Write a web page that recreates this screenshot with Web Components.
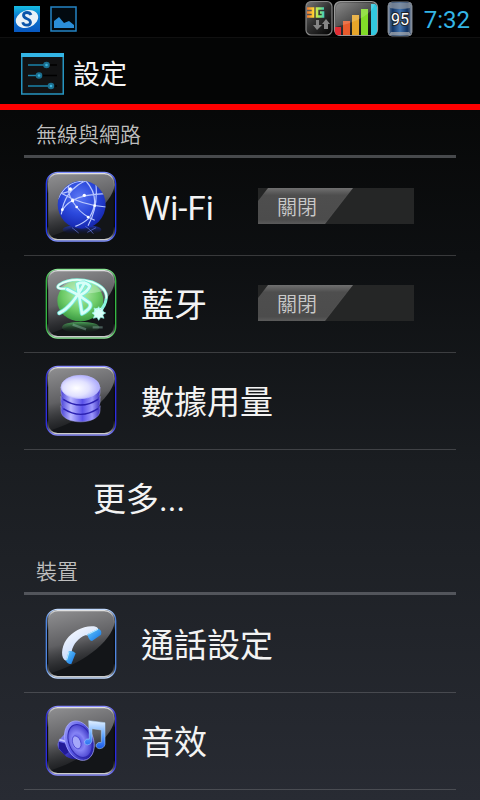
<!DOCTYPE html>
<html lang="zh-Hant">
<head>
<meta charset="utf-8">
<meta name="viewport" content="width=device-width, initial-scale=1">
<title>設定</title>
<style>
html{background:#282b33}
body{margin:0;min-height:100vh;color:#f3f3f3;font-family:Roboto,"Noto Sans CJK TC",sans-serif;background:linear-gradient(#000,#070808 14%,#0d0f11 32%,#1a1d21 58%,#282b33)}
</style>
</head>
<body>
<settings-screen></settings-screen>
<script>
const define = (name, html, init) => {
  const t = document.createElement('template');
  t.innerHTML = html;
  customElements.define(name, class extends HTMLElement {
    constructor() {
      super();
      this.attachShadow({mode: 'open'}).append(t.content.cloneNode(true));
    }
    connectedCallback() { if (init) init(this, this.shadowRoot); }
  });
};

const art = {
  wifi: ['#2238ee', '#7f90ff', `
    <defs><radialGradient id="g" cx=".45" cy=".35" r=".7"><stop offset="0" stop-color="#5b78f4"/><stop offset=".5" stop-color="#2b48dc"/><stop offset="1" stop-color="#1222a8"/></radialGradient>
    <clipPath id="c"><circle cx="137" cy="119" r="72"/></clipPath>
    <linearGradient id="f" x2="0" y2="1"><stop offset="0" stop-color="#2038c8"/><stop offset="1" stop-color="#0a1040" stop-opacity="0"/></linearGradient></defs>
    <ellipse cx="138" cy="194" rx="58" ry="15" fill="url(#f)"/>
    <circle cx="137" cy="119" r="72" fill="url(#g)"/>
    <g clip-path="url(#c)" fill="none" stroke="#b9c8ff" stroke-width="3.5">
      <path d="M66 102Q90 50 142 48M66 86Q100 86 126 60Q136 52 150 48M76 148Q84 80 142 50M98 62Q92 90 122 126Q140 150 176 166M110 106Q142 88 208 86M70 82Q140 122 212 126M150 48Q196 100 160 158Q142 176 118 184M180 60Q186 130 156 182M110 106Q84 122 78 140"/>
    </g>
    <path d="M148 184Q162 192 172 206M108 188L128 204M154 202L180 188" stroke="#6f86f0" stroke-width="3" opacity=".6" fill="none"/>
    <g fill="#fff"><circle cx="110" cy="107" r="5"/><circle cx="145" cy="91" r="5"/><circle cx="122" cy="126" r="4"/><circle cx="156" cy="156" r="4"/><circle cx="103" cy="72" r="5"/><circle cx="79" cy="134" r="4"/><circle cx="176" cy="122" r="4"/></g>`],
  bluetooth: ['#35b843', '#8fe898', `
    <defs><radialGradient id="g" cx=".5" cy=".35" r=".65"><stop offset="0" stop-color="#b4eeae"/><stop offset=".6" stop-color="#6cca66"/><stop offset="1" stop-color="#3a9a42"/></radialGradient>
    <linearGradient id="f" x2="0" y2="1"><stop offset="0" stop-color="#4da65a"/><stop offset="1" stop-color="#173020" stop-opacity="0"/></linearGradient></defs>
    <ellipse cx="134" cy="196" rx="56" ry="17" fill="url(#f)"/>
    <path d="M110 188L150 202M170 196h30" stroke="#b9f2e0" stroke-width="7" opacity=".3"/>
    <ellipse cx="133" cy="116" rx="69" ry="62" fill="url(#g)"/>
    <path d="M74 76Q100 46 160 56Q190 66 200 88Q140 104 74 80Z" fill="#e8fff0" opacity=".35"/>
    <g fill="none" stroke-linecap="round" stroke-linejoin="round">
      <path d="M92 80Q54 82 70 68Q108 44 168 60Q214 78 211 108Q208 132 192 146" stroke="#8af5df" stroke-width="9"/>
      <path d="M92 80Q54 82 70 68Q108 44 168 60Q214 78 211 108" stroke="#eafff9" stroke-width="5"/>
      <path d="M70 153Q108 136 146 62M94 82Q130 98 160 122Q172 136 138 155L124 66Q146 56 161 72Q156 88 132 100" stroke="#75ebdf" stroke-width="13"/>
      <path d="M70 153Q108 136 146 62M94 82Q130 98 160 122Q172 136 138 155L124 66Q146 56 161 72Q156 88 132 100" stroke="#d8fff8" stroke-width="8"/>
    </g>
    <circle cx="188" cy="152" r="15" fill="#d9fff9"/>
    <path d="M188 134l4 9 10-5-3 10 10 5-9 5 4 11-10-3-6 9-5-9-11 3 4-10-8-6 9-4-3-11 10 4z" fill="#d9fff9" stroke="#8cf4e2" stroke-width="2"/>`],
  data: ['#2e2ce0', '#8a8cff', `
    <defs><linearGradient id="g"><stop offset="0" stop-color="#4a43d8"/><stop offset=".25" stop-color="#b9b7ff"/><stop offset=".55" stop-color="#5a52ea"/><stop offset=".8" stop-color="#9c98fc"/><stop offset="1" stop-color="#3b30c0"/></linearGradient>
    <radialGradient id="t" cx=".4" cy=".55" r=".65"><stop offset="0" stop-color="#fff"/><stop offset=".5" stop-color="#e2e2ff"/><stop offset="1" stop-color="#a3a1fc"/></radialGradient></defs>
    <g fill="url(#g)" stroke="#a9a7ff" stroke-width="1.5">
      <path d="M75 140v14c0 46 117 46 117 0v-14c0 38-117 38-117 0z"/>
      <path d="M75 112v16c0 46 117 46 117 0v-16c0 38-117 38-117 0z"/>
      <path d="M75 84v16c0 46 117 46 117 0V84c0 38-117 38-117 0z"/>
      <path d="M77 108c10 32 102 32 113 0v12c-10 32-102 32-113 0zM77 136c10 32 102 32 113 0v12c-10 32-102 32-113 0z" stroke="none"/>
    </g>
    <path d="M82 121q52 34 104 0M82 149q52 34 104 0" fill="none" stroke="#2a20b0" stroke-width="4"/>
    <ellipse cx="133" cy="84" rx="58" ry="35" fill="url(#t)" stroke="#bbbaff" stroke-width="2"/>`],
  phone: ['#4f86e0', '#c4dcff', `
    <defs><linearGradient id="g" x2=".6" y2="1"><stop offset="0" stop-color="#fff"/><stop offset="1" stop-color="#bcd2fa"/></linearGradient>
    <linearGradient id="b" y2="1"><stop offset="0" stop-color="#69ccff"/><stop offset="1" stop-color="#0d6fe2"/></linearGradient></defs>
    <path d="M91 177C72 170 76 134 91 113C110 87 143 70 174 73Q185 75 187 82L160 103Q154 99 148 100C128 107 112 126 107 148L104 156Z" fill="url(#g)"/>
    <path d="M154 97L187 80Q199 84 195 98L168 117Q158 116 154 97Z" fill="url(#b)"/>
    <path d="M98 148Q110 145 119 154L106 186Q94 186 90 176Z" fill="url(#b)"/>
    <path d="M157 97L186 82M99 150L92 174" stroke="#b8ecff" stroke-width="3"/>`],
  sound: ['#2a29df', '#8a8cff', `
    <defs><linearGradient id="g" x2=".7" y2="1"><stop offset="0" stop-color="#aeb0ff"/><stop offset=".5" stop-color="#5a59e6"/><stop offset="1" stop-color="#211c9c"/></linearGradient>
    <radialGradient id="r" cx=".42" cy=".5" r=".6"><stop offset="0" stop-color="#4f4ce0"/><stop offset=".45" stop-color="#8583f5"/><stop offset="1" stop-color="#3a33c4"/></radialGradient>
    <linearGradient id="n" y2="1" x2="0"><stop offset="0" stop-color="#e4f1ff"/><stop offset=".55" stop-color="#5ba2ff"/><stop offset="1" stop-color="#1857e8"/></linearGradient></defs>
    <path d="M98 92L72 120Q60 134 68 150L90 172Q106 184 132 180Z" fill="url(#g)"/>
    <path d="M68 128L90 134L98 160L86 168L68 148Z" fill="#221a96"/><path d="M70 122L92 128" stroke="#c0c2ff" stroke-width="5"/>
    <ellipse cx="130" cy="125" rx="42" ry="61" transform="rotate(-20 130 125)" fill="url(#g)" stroke="#a9abff" stroke-width="2"/>
    <ellipse cx="132" cy="126" rx="34" ry="51" transform="rotate(-20 132 126)" fill="url(#r)" stroke="#2f28b0" stroke-width="3"/>
    <ellipse cx="122" cy="130" rx="12" ry="20" transform="rotate(-20 122 130)" fill="#a5a7fa" stroke="#3d36c8" stroke-width="2"/>
    <path d="M158 65L207 71V136Q204 149 190 149Q178 147 181 136Q186 128 196 130V93L168 89V126Q165 138 153 138Q143 135 146 126Q151 118 160 120Z" fill="url(#n)" stroke="#b5daff" stroke-width="1.5"/>`]
};

define('gloss-icon', `
<style>:host{display:block;flex:none;width:72px;height:72px}svg{display:block;width:100%;height:100%}</style>
<div></div>`, (el, root) => {
  const [edge, bright, body] = art[el.getAttribute('name')];
  root.querySelector('div').innerHTML = `
  <svg viewBox="27 18 216 216" aria-hidden="true">
    <defs>
      <linearGradient id="shine" x1=".2" x2=".45" y2="1"><stop offset="0" stop-color="#8c8c8e"/><stop offset=".5" stop-color="#606063"/><stop offset="1" stop-color="#1c1e21" stop-opacity=".4"/></linearGradient>
      <linearGradient id="rim" x2="0" y2="1"><stop offset="0" stop-color="${bright}"/><stop offset=".12" stop-color="${edge}"/><stop offset=".88" stop-color="${edge}"/><stop offset="1" stop-color="${bright}"/></linearGradient>
      <linearGradient id="top" x2="0" y2="1"><stop offset="0" stop-color="#fff" stop-opacity=".85"/><stop offset=".12" stop-color="#ddd" stop-opacity=".3"/><stop offset=".3" stop-color="#000" stop-opacity=".5"/><stop offset=".8" stop-color="#000" stop-opacity=".5"/><stop offset=".92" stop-color="#ddd" stop-opacity=".3"/><stop offset="1" stop-color="#fff" stop-opacity=".8"/></linearGradient>
    </defs>
    <rect x="31" y="22" width="208" height="206" rx="34" fill="#131518"/>
    <path d="M36 56Q38 28 66 26H206Q234 28 236 60C228 122 130 190 36 216Z" fill="url(#shine)"/>
    <rect x="31" y="22" width="208" height="206" rx="34" fill="none" stroke="url(#rim)" stroke-width="4"/>
    <rect x="35" y="26" width="200" height="198" rx="30" fill="none" stroke="url(#top)" stroke-width="4"/>
    ${body}
  </svg>`;
});

define('status-bar', `
<style>
:host{display:flex;align-items:center;height:38px;box-sizing:border-box;padding:0 10px 0 14px;background:#000;border-bottom:1px solid #101010}
svg{display:block;flex:none}
.s{margin-right:10px}
.end{display:flex;align-items:center;margin-left:auto}
.bat{margin:0 10px 0 6px}
time{padding-top:2px;font-size:24px;line-height:36px;color:#33b5e5}
</style>
<svg class="s" width="26" height="26" viewBox="0 0 26 26" role="img" aria-label="S"><defs><linearGradient id="a" x2="0" y2="1"><stop stop-color="#16bde2"/><stop offset=".4" stop-color="#0a78d0"/><stop offset="1" stop-color="#0757c0"/></linearGradient></defs><path fill="url(#a)" d="M0 0h26v26H0z"/><ellipse cx="13" cy="13" rx="11.5" ry="8.5" fill="#e9f2f8" transform="rotate(-20 13 13)"/><path d="M17 9q-1-2.500-4-2.500t-3.500 2.500q0 2.500 3.500 3.700t3.500 4q-.5 2.500-3.800 2.500t-4-3" fill="none" stroke="#0a55aa" stroke-width="2.800"/></svg>
<svg width="28" height="26" viewBox="0 0 28 26" role="img" aria-label="圖片"><path d="M1 1h25v24H1z" fill="#020a10" stroke="#2584c4" stroke-width="1.5"/><path d="M4 22v-7l5-4 5 6 5-2 5 4v3z" fill="#2b8ed8"/></svg>
<div class="end">
<svg width="80" height="38" viewBox="300 0 80 38" role="img" aria-label="3G">
 <defs><linearGradient id="k" x2=".8" y2="1"><stop stop-color="#777"/><stop offset=".5" stop-color="#333"/><stop offset="1" stop-color="#090909"/></linearGradient>
 <linearGradient id="q" gradientUnits="userSpaceOnUse" x1="306" x2="326"><stop stop-color="#e63"/><stop offset=".4" stop-color="#fd3"/><stop offset=".65" stop-color="#9e6"/><stop offset="1" stop-color="#2bd"/></linearGradient></defs>
 <rect x="306" y="1.5" width="26" height="33.5" rx="5" fill="url(#k)" stroke="#888" stroke-width="1.2"/>
 <path d="M307 8.500h6v8h-6M307 12.500h6M324 8.500h-7v8h6v-4h-3" fill="none" stroke="url(#q)" stroke-width="2.6"/>
 <path d="M316 20h3v5h3l-5 5-4-5h3zM324 29v-5h-2l4-5 4 5h-2v5z" fill="#858585"/>
 <rect x="334.5" y="1.5" width="43" height="34" rx="6" fill="url(#k)" stroke="#999" stroke-width="1.2"/>
 <path d="M335 27h6v8h-5q-2-4-1-8z" fill="#e22c33"/><path d="M343 21h7v14h-7z" fill="#e85b2c"/><path d="M352 15h7v20h-7z" fill="#e6a62a"/><path d="M361 9h7v26h-7z" fill="#82dc28"/><path d="M371 4h4q2 1 2 3v25l-2 3h-4z" fill="#32c8df"/>
 <path d="M336 7q2-4 6-4h33q-4 16-40 24z" fill="#fff" opacity=".16"/>
</svg>
<svg class="bat" width="28" height="38" viewBox="385 0 28 38" role="img" aria-label="電池 95"><defs><linearGradient id="b"><stop stop-color="#5f7590"/><stop offset=".2" stop-color="#113668"/><stop offset=".5" stop-color="#4274af"/><stop offset=".8" stop-color="#103363"/><stop offset="1" stop-color="#65758a"/></linearGradient></defs>
 <rect x="387" y="2" width="24" height="34" rx="4" fill="url(#b)" stroke="#777c83"/><path d="M388 3h22l-1 5q-10 2-20 0z" fill="#8e949c" opacity=".75"/><path d="M388 35h22l-2-3h-18z" fill="#a5a8ac" opacity=".75"/><path d="M388 5v28M410 5v28" stroke="#e8e8e8" opacity=".4"/>
 <text x="399" y="25" text-anchor="middle" font-family="Roboto,sans-serif" font-size="16" fill="#fff" stroke="#222" stroke-width="2" paint-order="stroke">95</text></svg>
<time>7:32</time>
</div>`);

define('title-bar', `
<style>
:host{display:flex;align-items:center;gap:9px;box-sizing:border-box;height:72px;padding:6px 0 0 21px;border-bottom:6px solid #f00;background:#040505}
h1{margin:0;padding-top:2px;font-size:27px;line-height:40px;font-weight:400;color:#f5f5f5}
svg{display:block}
</style>
<svg width="43" height="42" viewBox="0 0 43 42" aria-hidden="true"><path d="M.75 1h41.500v40H.75z" fill="#111213" stroke="#2694c0" stroke-width="1.5"/><path d="M0 0h43v4H0z" fill="#33b5e5"/><path d="M7 12h29M7 22.500h29M7 33h29" stroke="#000" stroke-width="1.5"/><path d="M7 12h18M7 22.500h11M7 33h23" stroke="#1e86ad" stroke-width="1.5"/><g fill="#1b6f8f"><circle cx="25.5" cy="12" r="3.3"/><circle cx="18" cy="22.5" r="3.3"/><circle cx="30" cy="33" r="3.3"/></g><g fill="#3bb4dd"><circle cx="25.5" cy="12" r="1.3"/><circle cx="18" cy="22.5" r="1.3"/><circle cx="30" cy="33" r="1.3"/></g></svg>
<h1><slot></slot></h1>`);

define('settings-group', `
<style>
:host{display:block;margin:0 24px}
h2{box-sizing:border-box;height:48px;margin:0 0 1px;padding:9px 12px 0;border-bottom:3px solid #86888d80;font-size:21px;line-height:32px;font-weight:350;color:#bebebe}
</style>
<section><h2></h2><slot></slot></section>`, (el, root) => {
  root.querySelector('h2').textContent = el.getAttribute('heading');
});

define('setting-row', `
<style>
:host{display:flex;align-items:center;gap:24px;height:96px;padding:0 42px 0 21px;border-bottom:1px solid #9a9ca04d}
:host([plain]){padding-left:69px;border-color:transparent}
:host([plain]) slot[name=icon]{display:none}
a{flex:1;padding-top:4px;font-size:33px;line-height:48px;font-weight:400;color:inherit;text-decoration:none;white-space:nowrap}
</style>
<slot name="icon"></slot><a href="#"><slot></slot></a><slot name="control"></slot>`);

define('slant-switch', `
<style>
:host{display:block;flex:none;padding-bottom:2px}
button{display:grid;grid-template-columns:95px 1fr;width:156px;height:36px;padding:0;border:0;background:#252626;color:#c9c9c9;font:350 20px/36px Roboto,"Noto Sans CJK TC",sans-serif;text-align:left}
span{padding-left:19px;padding-top:2px;height:36px;box-sizing:border-box;line-height:36px;clip-path:polygon(10px 0,95px 0,67px 36px,0 36px,0 13px);background:linear-gradient(128deg,transparent 76%,#777 86%,transparent 87%),linear-gradient(#707070,#4e4e4e 20%,#4c4c4c 88%,#5b5b5b)}
</style>
<button type="button" role="switch" aria-checked="false"><span><slot></slot></span></button>`, (el, root) => {
  root.querySelector('button').setAttribute('aria-label', el.getAttribute('label'));
});

define('settings-screen', `
<style>:host{display:block}</style>
<header><status-bar></status-bar><title-bar>設定</title-bar></header>
<main>
<settings-group heading="無線與網路">
 <setting-row><gloss-icon slot="icon" name="wifi"></gloss-icon>Wi-Fi<slant-switch slot="control" label="Wi-Fi">關閉</slant-switch></setting-row>
 <setting-row><gloss-icon slot="icon" name="bluetooth"></gloss-icon>藍牙<slant-switch slot="control" label="藍牙">關閉</slant-switch></setting-row>
 <setting-row><gloss-icon slot="icon" name="data"></gloss-icon>數據用量</setting-row>
 <setting-row plain>更多...</setting-row>
</settings-group>
<settings-group heading="裝置">
 <setting-row><gloss-icon slot="icon" name="phone"></gloss-icon>通話設定</setting-row>
 <setting-row><gloss-icon slot="icon" name="sound"></gloss-icon>音效</setting-row>
</settings-group>
</main>`);
</script>
</body>
</html>
